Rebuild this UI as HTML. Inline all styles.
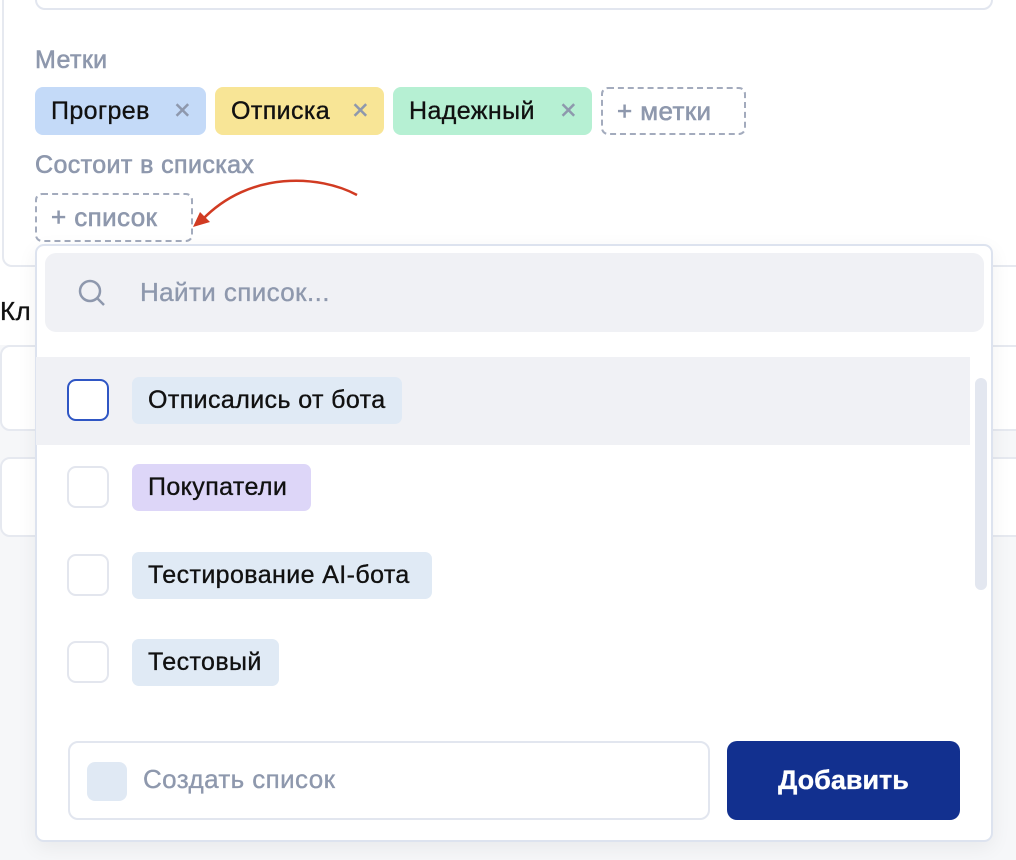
<!DOCTYPE html>
<html><head><meta charset="utf-8"><style>
*{box-sizing:border-box;margin:0;padding:0}
body{width:1016px;height:860px;overflow:hidden;background:#f6f7f9;font-family:"Liberation Sans","Noto Sans CJK SC",sans-serif;position:relative;color:#111;letter-spacing:0.4px;-webkit-text-stroke:0.35px}
.a{position:absolute;white-space:nowrap}
.lbl{color:#8e98ad;font-size:25px;-webkit-text-stroke:0.6px}
.tag{position:absolute;top:87px;height:48px;border-radius:8px;font-size:25px;line-height:48px;padding-left:16px;white-space:nowrap}
.tag i{font-style:normal;color:#8e98ad;position:absolute;right:14px;font-size:22px}
.dash{position:absolute;border:2px dashed #a3abbd;border-radius:7px;color:#8e98ad;font-size:26px;line-height:44px;padding-left:14px;white-space:nowrap;-webkit-text-stroke:0.6px}
.row{position:absolute;left:36px;width:934px;height:88px}
.cb{position:absolute;left:31px;top:22px;width:42px;height:42px;border:2px solid #e3e6ee;border-radius:9px;background:#fff;-webkit-text-stroke:0}
.chip{position:absolute;left:96px;top:20px;height:47px;border-radius:7px;background:#e0eaf5;font-size:25px;line-height:47px;padding:0 16px;white-space:nowrap}
</style></head><body>
<div class="a" style="left:0;top:0;width:1016px;height:345px;background:#fff"></div>
<div class="a" style="left:2px;top:-10px;width:1030px;height:277px;border:2px solid #e6e9f0;border-radius:10px;background:#fff"></div>
<div class="a" style="left:35px;top:-20px;width:958px;height:30px;border:2px solid #e2e6ef;border-radius:10px"></div>
<div class="a" style="left:0;top:345px;width:1030px;height:86px;border:2px solid #e6e9f0;border-radius:10px;background:#fff"></div>
<div class="a" style="left:0;top:457px;width:1030px;height:80px;border:2px solid #e6e9f0;border-radius:10px;background:#fff"></div>
<div class="a" style="left:0;top:296px;font-size:26px">Кл</div>
<div class="a lbl" style="left:35px;top:46px">Метки</div>
<div class="tag" style="left:35px;width:171px;background:#c4daf8">Прогрев<i>✕</i></div>
<div class="tag" style="left:215px;width:169px;background:#f8e596">Отписка<i>✕</i></div>
<div class="tag" style="left:393px;width:199px;background:#b6f0d3">Надежный<i>✕</i></div>
<div class="dash" style="left:601px;top:87px;width:145px;height:48px">+ метки</div>
<div class="a lbl" style="left:35px;top:151px">Состоит в списках</div>
<div class="dash" style="left:35px;top:193px;width:158px;height:49px">+ список</div>
<svg class="a" style="left:180px;top:170px" width="190" height="70"><path d="M177 25 C140 5 70 0 22 50" stroke="#d13b22" stroke-width="2.5" fill="none"/><path d="M13 57 L20 42 L30 52 Z" fill="#d13b22"/></svg>
<div class="a" style="left:35px;top:244px;width:958px;height:598px;background:#fff;border:2px solid #dde3ef;border-radius:9px;box-shadow:0 6px 20px rgba(0,0,0,.06)"></div>
<div class="a" style="left:45px;top:253px;width:939px;height:79px;background:#f0f1f5;border-radius:11px"></div>
<svg class="a" style="left:77px;top:278px" width="30" height="30"><circle cx="13" cy="13" r="10" stroke="#8e98ad" stroke-width="2.5" fill="none"/><path d="M20 20 L27 27" stroke="#8e98ad" stroke-width="2.5"/></svg>
<div class="a lbl" style="left:140px;top:277px;font-size:26px;-webkit-text-stroke:0.35px">Найти список...</div>
<div class="row" style="top:357px;background:#f0f1f5"><div class="cb" style="border-color:#2f56c4"></div><div class="chip" style="width:270px">Отписались от бота</div></div>
<div class="row" style="top:444px"><div class="cb"></div><div class="chip" style="background:#ddd6f8;width:179px">Покупатели</div></div>
<div class="row" style="top:532px"><div class="cb"></div><div class="chip" style="width:300px">Тестирование AI-бота</div></div>
<div class="row" style="top:619px"><div class="cb"></div><div class="chip" style="width:147px">Тестовый</div></div>
<div class="a" style="left:975px;top:378px;width:12px;height:212px;background:#e3e7f0;border-radius:6px"></div>
<div class="a" style="left:68px;top:741px;width:642px;height:79px;border:2px solid #e2e6ef;border-radius:10px;background:#fff"></div>
<div class="a" style="left:87px;top:762px;width:40px;height:39px;background:#e0e9f4;border-radius:8px"></div>
<div class="a lbl" style="left:143px;top:764px;font-size:26px;-webkit-text-stroke:0.35px">Создать список</div>
<div class="a" style="left:727px;top:741px;width:233px;height:79px;background:#12308f;border-radius:10px;color:#fff;font-weight:bold;font-size:27px;text-align:center;line-height:79px;letter-spacing:0">Добавить</div>
</body></html>
